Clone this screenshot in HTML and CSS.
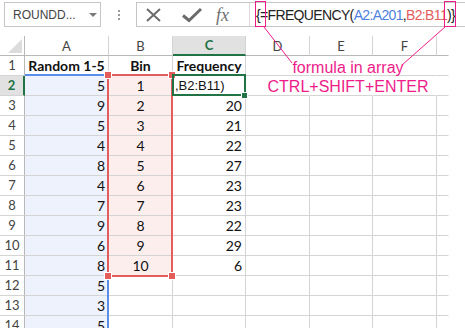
FILE: index.html
```html
<!DOCTYPE html>
<html>
<head>
<meta charset="utf-8">
<link rel="stylesheet" href="styles.css">
</head>
<body>
<div class="page">
  <div class="bar">
    <div class="namebox"><span class="nbtext">ROUNDD...</span><span class="caret"></span></div>
    <div class="grip"><i></i><i></i><i></i></div>
    <div class="fbox">
      <div class="btns">
        <svg class="ico" width="20" height="16" viewBox="0 0 20 16"><path d="M3 2 L16 14 M16 2 L3 14" stroke="#6b6b6b" stroke-width="2" fill="none"/></svg>
        <svg class="ico chk" width="22" height="16" viewBox="0 0 22 16"><path d="M2 8.5 L8 13.5 L20 2" stroke="#6b6b6b" stroke-width="3" fill="none"/></svg>
        <span class="fx">fx</span>
      </div>
      <div class="ftext">{=FREQUENCY(<span class="rb">A2:A201</span>,<span class="rr">B2:B11</span>)}</div>
    </div>
  </div>

  <div class="sheet">
    <div class="c corner"><svg width="14" height="14" viewBox="0 0 14 14"><path d="M14 0 L14 14 L0 14 Z" fill="#dcdcdc"/></svg></div>
    <div class="c h">A</div><div class="c h">B</div><div class="c h sel">C</div><div class="c h">D</div><div class="c h">E</div><div class="c h">F</div><div class="c h g"></div>

    <div class="c rh">1</div><div class="c t">Random 1-5</div><div class="c t">Bin</div><div class="c t">Frequency</div><div class="c nov"></div><div class="c nov"></div><div class="c nov"></div><div class="c g"></div>
    <div class="c rh sel">2</div><div class="c a n">5</div><div class="c b m">1</div><div class="c ed">,B2:B11)</div><div class="c nov"></div><div class="c nov"></div><div class="c nov"></div><div class="c g"></div>
    <div class="c rh">3</div><div class="c a n">9</div><div class="c b m">2</div><div class="c n">20</div><div class="c"></div><div class="c"></div><div class="c"></div><div class="c g"></div>
    <div class="c rh">4</div><div class="c a n">5</div><div class="c b m">3</div><div class="c n">21</div><div class="c"></div><div class="c"></div><div class="c"></div><div class="c g"></div>
    <div class="c rh">5</div><div class="c a n">4</div><div class="c b m">4</div><div class="c n">22</div><div class="c"></div><div class="c"></div><div class="c"></div><div class="c g"></div>
    <div class="c rh">6</div><div class="c a n">8</div><div class="c b m">5</div><div class="c n">27</div><div class="c"></div><div class="c"></div><div class="c"></div><div class="c g"></div>
    <div class="c rh">7</div><div class="c a n">4</div><div class="c b m">6</div><div class="c n">23</div><div class="c"></div><div class="c"></div><div class="c"></div><div class="c g"></div>
    <div class="c rh">8</div><div class="c a n">7</div><div class="c b m">7</div><div class="c n">23</div><div class="c"></div><div class="c"></div><div class="c"></div><div class="c g"></div>
    <div class="c rh">9</div><div class="c a n">9</div><div class="c b m">8</div><div class="c n">22</div><div class="c"></div><div class="c"></div><div class="c"></div><div class="c g"></div>
    <div class="c rh">10</div><div class="c a n">6</div><div class="c b m">9</div><div class="c n">29</div><div class="c"></div><div class="c"></div><div class="c"></div><div class="c g"></div>
    <div class="c rh">11</div><div class="c a n">8</div><div class="c b m">10</div><div class="c n">6</div><div class="c"></div><div class="c"></div><div class="c"></div><div class="c g"></div>
    <div class="c rh">12</div><div class="c a n">5</div><div class="c"></div><div class="c"></div><div class="c"></div><div class="c"></div><div class="c"></div><div class="c g"></div>
    <div class="c rh">13</div><div class="c a n">3</div><div class="c"></div><div class="c"></div><div class="c"></div><div class="c"></div><div class="c"></div><div class="c g"></div>
    <div class="c rh">14</div><div class="c a n">5</div><div class="c"></div><div class="c"></div><div class="c"></div><div class="c"></div><div class="c"></div><div class="c g"></div>

    <div class="range-a"></div>
    <div class="range-b"></div>
    <div class="hdl hdl-tl"></div><div class="hdl hdl-tr"></div><div class="hdl hdl-bl"></div><div class="hdl hdl-br"></div>
    <div class="active"></div>
    <div class="fill"></div>
  </div>

  <div class="note">formula in array<br>CTRL+SHIFT+ENTER</div>
  <svg class="marks" width="465" height="328" viewBox="0 0 465 328">
    <rect x="255.5" y="1.5" width="10" height="25" fill="none" stroke="#ee1c8a" stroke-width="1"/>
    <rect x="444.5" y="1.5" width="11" height="25" fill="none" stroke="#ee1c8a" stroke-width="1"/>
    <line x1="264" y1="27" x2="292" y2="63" stroke="#ee1c8a" stroke-width="1"/>
    <line x1="445" y1="27" x2="402" y2="65" stroke="#ee1c8a" stroke-width="1"/>
  </svg>
</div>
</body>
</html>
```

FILE: styles.css
```css
html, body {
  margin: 0;
  padding: 0;
  background: #ffffff;
}
.page {
  position: relative;
  width: 465px;
  height: 328px;
  overflow: hidden;
  font-family: "Lato", "Liberation Sans", sans-serif;
}
.bar {
  display: flex;
  align-items: flex-start;
  height: 36px;
  padding: 2px 0 0 4px;
  box-sizing: border-box;
}
.namebox {
  width: 97px;
  height: 25px;
  box-sizing: border-box;
  border: 1px solid #c6c6c6;
  display: flex;
  align-items: center;
  padding: 0 0 0 8px;
  font-family: "Liberation Sans", sans-serif;
  font-size: 12px;
  color: #444;
}
.nbtext { flex: 1; }
.caret {
  width: 0;
  height: 0;
  border-left: 4px solid transparent;
  border-right: 4px solid transparent;
  border-top: 4px solid #7a7a7a;
  margin-right: 3px;
}
.grip {
  width: 35px;
  height: 25px;
  display: flex;
  flex-direction: column;
  align-items: center;
  justify-content: center;
  gap: 2px;
}
.grip i {
  display: block;
  width: 2px;
  height: 2px;
  background: #9a9a9a;
}
.fbox {
  flex: 1;
  margin-right: -4px;
  height: 25px;
  box-sizing: border-box;
  border: 1px solid #c6c6c6;
  display: flex;
  align-items: center;
}
.btns {
  width: 112px;
  display: flex;
  align-items: center;
  padding-left: 7px;
  box-sizing: border-box;
  height: 100%;
}
.ico { display: block; }
.chk { margin-left: 17px; }
.fx {
  margin-left: 13px;
  font-family: "Liberation Serif", serif;
  font-style: italic;
  font-size: 18px;
  color: #707070;
  line-height: 1;
}
.ftext {
  height: 100%;
  border-left: 1px solid #dadada;
  padding-left: 6px;
  display: flex;
  align-items: center;
  font-family: "Liberation Sans", sans-serif;
  font-size: 14px;
  letter-spacing: -0.65px;
  color: #222;
  white-space: nowrap;
}
.rb { color: #4d7fe0; }
.rr { color: #e35d5d; }

.sheet {
  position: relative;
  display: grid;
  grid-template-columns: 25px 84px 64px 73px 64px 63px 64px 12px;
  grid-auto-rows: 20px;
  width: 449px;
  font-size: 14px;
  color: #111;
}
.c {
  box-sizing: border-box;
  border-right: 1px solid #d4d4d4;
  border-bottom: 1px solid #d4d4d4;
  line-height: 19px;
  white-space: nowrap;
  overflow: hidden;
}
.g { border-right-color: transparent; }
.nov { border-right-color: transparent; }
.corner {
  border-right-color: #b8b8b8;
  border-bottom-color: #b8b8b8;
  display: flex;
  align-items: flex-end;
  justify-content: flex-end;
  padding: 0 2px 2px 0;
}
.h {
  text-align: center;
  color: #444;
  border-bottom-color: #b8b8b8;
  font-size: 13px;
  line-height: 20px;
}
.h.sel {
  background: #e1e1e1;
  color: #217346;
  font-weight: bold;
  border-bottom: 2px solid #217346;
  line-height: 19px;
}
.rh {
  text-align: center;
  color: #444;
  font-size: 13px;
  border-right-color: #b8b8b8;
}
.rh.sel {
  background: #e1e1e1;
  color: #217346;
  font-weight: bold;
  border-right: 2px solid #217346;
}
.t {
  font-weight: bold;
  text-align: center;
}
.n {
  text-align: right;
  padding-right: 3px;
}
.m { text-align: center; }
.ed {
  padding-left: 2px;
  font-family: "Liberation Sans", sans-serif;
  font-size: 13px;
}
.a { background: #edf2fc; }
.b { background: #fdeeee; }

.range-a {
  position: absolute;
  left: 25px;
  top: 38px;
  width: 84px;
  height: 300px;
  box-sizing: border-box;
  border-top: 2px solid #5b8ee6;
  border-right: 2px solid #5b8ee6;
}
.range-b {
  position: absolute;
  left: 107px;
  top: 38px;
  width: 66px;
  height: 203px;
  box-sizing: border-box;
  border: 2px solid #e35d5d;
}
.hdl {
  position: absolute;
  width: 6px;
  height: 6px;
  background: #e35d5d;
  box-shadow: 0 0 0 1px #fff;
}
.hdl-tl { left: 105px; top: 36px; }
.hdl-tr { left: 169px; top: 36px; }
.hdl-bl { left: 105px; top: 237px; }
.hdl-br { left: 169px; top: 237px; }
.active {
  position: absolute;
  left: 172px;
  top: 38px;
  width: 74px;
  height: 22px;
  box-sizing: border-box;
  border: 2px solid #217346;
}
.fill {
  position: absolute;
  left: 242px;
  top: 57px;
  width: 5px;
  height: 5px;
  background: #217346;
  box-shadow: 0 0 0 1px #fff;
}
.note {
  position: absolute;
  left: 258px;
  top: 58px;
  width: 180px;
  text-align: center;
  font-family: "Liberation Sans", sans-serif;
  font-size: 16px;
  line-height: 19px;
  color: #ee1c8a;
}
.marks {
  position: absolute;
  left: 0;
  top: 0;
  pointer-events: none;
}
```
